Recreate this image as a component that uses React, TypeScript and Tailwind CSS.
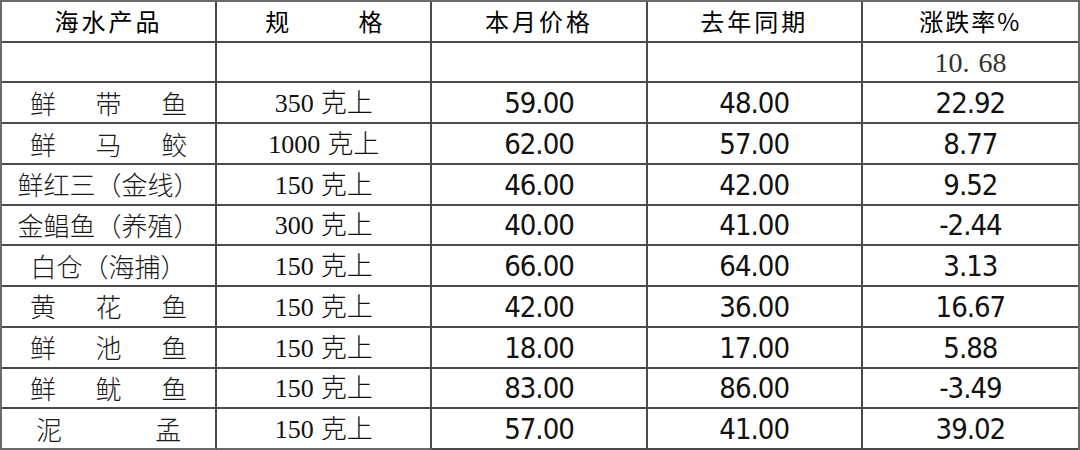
import React from "react";

type Row = {
  name: string[];
  namePad: string;
  spec: string;
  cur: string;
  last: string;
  rate: string;
};

const rows: Row[] = [
  { name: ["鲜", "带", "鱼"], namePad: "px-[28px]", spec: "350 克上", cur: "59.00", last: "48.00", rate: "22.92" },
  { name: ["鲜", "马", "鲛"], namePad: "px-[28px]", spec: "1000 克上", cur: "62.00", last: "57.00", rate: "8.77" },
  { name: ["鲜红三（金线）"], namePad: "px-[10px]", spec: "150 克上", cur: "46.00", last: "42.00", rate: "9.52" },
  { name: ["金鲳鱼（养殖）"], namePad: "px-[10px]", spec: "300 克上", cur: "40.00", last: "41.00", rate: "-2.44" },
  { name: ["白仓（海捕）"], namePad: "px-[10px]", spec: "150 克上", cur: "66.00", last: "64.00", rate: "3.13" },
  { name: ["黄", "花", "鱼"], namePad: "px-[28px]", spec: "150 克上", cur: "42.00", last: "36.00", rate: "16.67" },
  { name: ["鲜", "池", "鱼"], namePad: "px-[28px]", spec: "150 克上", cur: "18.00", last: "17.00", rate: "5.88" },
  { name: ["鲜", "鱿", "鱼"], namePad: "px-[28px]", spec: "150 克上", cur: "83.00", last: "86.00", rate: "-3.49" },
  { name: ["泥", "孟"], namePad: "px-[34px]", spec: "150 克上", cur: "57.00", last: "41.00", rate: "39.02" },
];

const cjkSans = "font-['Noto_Sans_CJK_SC',sans-serif]";
const serif = "font-['Liberation_Serif','Noto_Sans_CJK_SC',serif]";
const num = "font-['DejaVu_Sans_Condensed','DejaVu_Sans',sans-serif]";

function Cell({ children, className = "", last = false }: { children?: React.ReactNode; className?: string; last?: boolean }) {
  return (
    <div
      className={`flex items-center border-b-2 border-[#4a4a4a] ${last ? "" : "border-r-2"} ${className}`}
    >
      {children}
    </div>
  );
}

function NumCell({ v, last = false }: { v: string; last?: boolean }) {
  return (
    <Cell className="justify-center" last={last}>
      <span className={`${num} text-[29px] tracking-[-1px] leading-none text-[#111] pt-[2px]`}>{v}</span>
    </Cell>
  );
}

export default function App() {
  return (
    <div className="w-[1080px] h-[450px] bg-white">
      <div className="w-[1080px] h-[450px] border-2 border-b-0 border-[#6a6a6a] grid grid-cols-5 grid-rows-11 text-black">
        {/* header */}
        <Cell className="justify-center">
          <span className={`${cjkSans} text-[24px] tracking-[3px] leading-none`}>海水产品</span>
        </Cell>
        <Cell className="justify-between px-[48px]">
          <span className={`${cjkSans} text-[24px] leading-none`}>规</span>
          <span className={`${cjkSans} text-[24px] leading-none`}>格</span>
        </Cell>
        <Cell className="justify-center">
          <span className={`${cjkSans} text-[24px] tracking-[3px] leading-none`}>本月价格</span>
        </Cell>
        <Cell className="justify-center">
          <span className={`${cjkSans} text-[24px] tracking-[3px] leading-none`}>去年同期</span>
        </Cell>
        <Cell className="justify-center" last>
          <span className={`${cjkSans} text-[24px] tracking-[2px] leading-none`}>涨跌率%</span>
        </Cell>

        {/* summary row */}
        <Cell />
        <Cell />
        <Cell />
        <Cell />
        <Cell className="justify-center" last>
          <span className={`${serif} text-[28px] leading-none text-[#333] pt-[2px]`}>
            10.<span className="ml-[9px]">68</span>
          </span>
        </Cell>

        {rows.map((r, i) => {
          const isLast = i === rows.length - 1;
          return (
            <React.Fragment key={i}>
              <Cell className={`${r.name.length > 1 ? "justify-between" : "justify-center"} ${r.namePad} ${isLast ? "border-b-[#6a6a6a]" : ""}`}>
                {r.name.map((c, j) => (
                  <span key={j} className={`${cjkSans} font-light text-[26px] leading-none text-[#1a1a1a]`}>
                    {c}
                  </span>
                ))}
              </Cell>
              <Cell className={`justify-center ${isLast ? "border-b-[#6a6a6a]" : ""}`}>
                <span className={`${serif} text-[26px] leading-none text-[#111]`}>
                  {r.spec.split(" ")[0]}
                  <span className={`${cjkSans} font-light text-[26px] ml-[7px]`}>{r.spec.split(" ")[1]}</span>
                </span>
              </Cell>
              <NumCell v={r.cur} />
              <NumCell v={r.last} />
              <NumCell v={r.rate} last />
            </React.Fragment>
          );
        })}
      </div>
    </div>
  );
}
